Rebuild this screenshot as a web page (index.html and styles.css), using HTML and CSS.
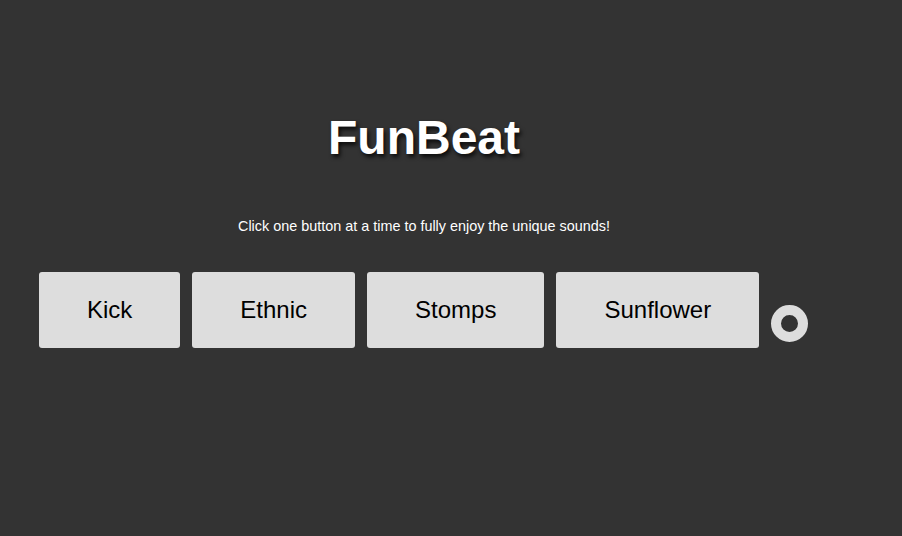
FILE: index.html
```html
<!DOCTYPE html>
<html>
<head>
<meta charset="utf-8">
<link rel="stylesheet" href="styles.css">
</head>
<body>
<div class="page">
  <h1 class="title">FunBeat</h1>
  <p class="subtitle">Click one button at a time to fully enjoy the unique sounds!</p>
  <div class="pads">
    <button class="pad">Kick</button>
    <button class="pad">Ethnic</button>
    <button class="pad">Stomps</button>
    <button class="pad">Sunflower</button>
    <span class="record"></span>
  </div>
</div>
</body>
</html>
```
FILE: styles.css
```css
html, body {
  margin: 0;
  padding: 0;
  background: #333333;
  font-family: "Liberation Sans", Arial, sans-serif;
}
.page {
  width: 848px;
  padding-top: 110px;
}
.title {
  margin: 0;
  font-size: 48px;
  line-height: 55px;
  font-weight: bold;
  color: #ffffff;
  text-align: center;
  text-shadow: 2px 3px 4px rgba(0, 0, 0, 0.8);
}
.subtitle {
  margin: 53px 0 0 0;
  font-size: 14.4px;
  line-height: 16px;
  color: #ffffff;
  text-align: center;
}
.pads {
  display: flex;
  align-items: flex-start;
  gap: 12px;
  margin: 38px 0 0 39px;
}
.pad {
  font-family: "Liberation Sans", Arial, sans-serif;
  font-size: 24px;
  line-height: 28px;
  padding: 24px 48px;
  border: none;
  border-radius: 3px;
  background: #dddddd;
  color: #000000;
}
.record {
  margin-top: 33px;
  width: 17px;
  height: 17px;
  border: 10px solid #dddddd;
  border-radius: 50%;
  background: #333333;
}
```
